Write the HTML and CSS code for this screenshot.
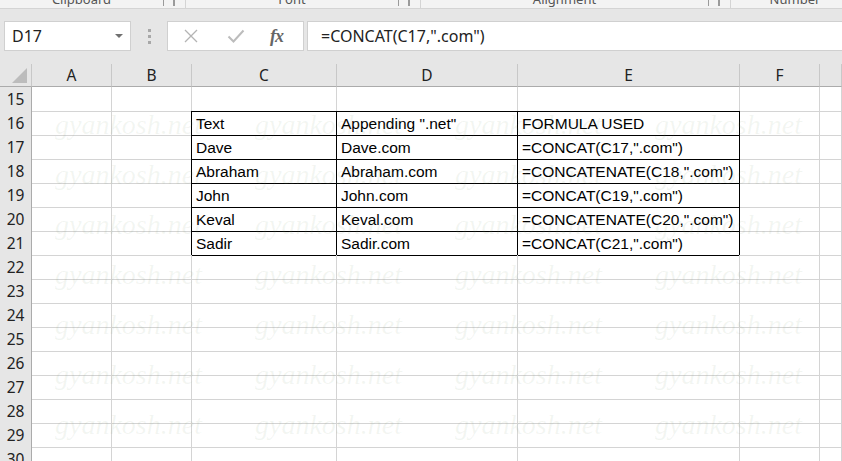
FILE: index.html
```html
<!DOCTYPE html>
<html lang="en">
  <head>
    <meta charset="UTF-8" />
    <meta name="viewport" content="width=device-width, initial-scale=1.0" />
    <title>CONCAT</title>
    <link rel="stylesheet" href="styles.css">
  </head>
  <body>
    <header class="ribbon">
      <div class="group g1"><span class="label">Clipboard</span><span class="launcher"></span></div>
      <div class="group g2"><span class="label">Font</span><span class="launcher"></span></div>
      <div class="group g3"><span class="label">Alignment</span><span class="launcher"></span></div>
      <div class="group g4"><span class="label">Number</span><span class="launcher"></span></div>
    </header>
    <div class="fbar">
      <div class="namebox">
        <span>D17</span>
        <span class="arrow"></span>
      </div>
      <div class="grip"><i></i><i></i><i></i></div>
      <div class="buttons">
        <svg class="cancel" width="16" height="16" viewBox="0 0 16 16">
          <path d="M2 2 L14 14 M14 2 L2 14" stroke="#b4b4b4" stroke-width="1.3" fill="none" />
        </svg>
        <svg class="enter" width="18" height="16" viewBox="0 0 18 16">
          <path d="M1.5 8.5 L6.5 13.5 L16.5 2.5" stroke="#bcbcbc" stroke-width="2" fill="none" />
        </svg>
        <span class="fx">fx</span>
      </div>
      <div class="formula">=CONCAT(C17,".com")</div>
    </div>
    <main class="sheet">
      <div class="row heads">
        <div class="corner"><span class="tri"></span></div>
        <div class="ch">A</div>
        <div class="ch">B</div>
        <div class="ch">C</div>
        <div class="ch">D</div>
        <div class="ch">E</div>
        <div class="ch">F</div>
        <div class="ch"></div>
      </div>
      <div class="body">
        <div class="row"><div class="rh">15</div><div class="c"></div><div class="c"></div><div class="c bb"></div><div class="c bb"></div><div class="c bb"></div><div class="c"></div><div class="c"></div></div>
        <div class="row"><div class="rh">16</div><div class="c"></div><div class="c br"></div><div class="c t">Text</div><div class="c t">Appending ".net"</div><div class="c t">FORMULA USED</div><div class="c"></div><div class="c"></div></div>
        <div class="row"><div class="rh">17</div><div class="c"></div><div class="c br"></div><div class="c t">Dave</div><div class="c t">Dave.com</div><div class="c t">=CONCAT(C17,".com")</div><div class="c"></div><div class="c"></div></div>
        <div class="row"><div class="rh">18</div><div class="c"></div><div class="c br"></div><div class="c t">Abraham</div><div class="c t">Abraham.com</div><div class="c t">=CONCATENATE(C18,".com")</div><div class="c"></div><div class="c"></div></div>
        <div class="row"><div class="rh">19</div><div class="c"></div><div class="c br"></div><div class="c t">John</div><div class="c t">John.com</div><div class="c t">=CONCAT(C19,".com")</div><div class="c"></div><div class="c"></div></div>
        <div class="row"><div class="rh">20</div><div class="c"></div><div class="c br"></div><div class="c t">Keval</div><div class="c t">Keval.com</div><div class="c t">=CONCATENATE(C20,".com")</div><div class="c"></div><div class="c"></div></div>
        <div class="row"><div class="rh">21</div><div class="c"></div><div class="c br"></div><div class="c t">Sadir</div><div class="c t">Sadir.com</div><div class="c t">=CONCAT(C21,".com")</div><div class="c"></div><div class="c"></div></div>
        <div class="row"><div class="rh">22</div><div class="c"></div><div class="c"></div><div class="c"></div><div class="c"></div><div class="c"></div><div class="c"></div><div class="c"></div></div>
        <div class="row"><div class="rh">23</div><div class="c"></div><div class="c"></div><div class="c"></div><div class="c"></div><div class="c"></div><div class="c"></div><div class="c"></div></div>
        <div class="row"><div class="rh">24</div><div class="c"></div><div class="c"></div><div class="c"></div><div class="c"></div><div class="c"></div><div class="c"></div><div class="c"></div></div>
        <div class="row"><div class="rh">25</div><div class="c"></div><div class="c"></div><div class="c"></div><div class="c"></div><div class="c"></div><div class="c"></div><div class="c"></div></div>
        <div class="row"><div class="rh">26</div><div class="c"></div><div class="c"></div><div class="c"></div><div class="c"></div><div class="c"></div><div class="c"></div><div class="c"></div></div>
        <div class="row"><div class="rh">27</div><div class="c"></div><div class="c"></div><div class="c"></div><div class="c"></div><div class="c"></div><div class="c"></div><div class="c"></div></div>
        <div class="row"><div class="rh">28</div><div class="c"></div><div class="c"></div><div class="c"></div><div class="c"></div><div class="c"></div><div class="c"></div><div class="c"></div></div>
        <div class="row"><div class="rh">29</div><div class="c"></div><div class="c"></div><div class="c"></div><div class="c"></div><div class="c"></div><div class="c"></div><div class="c"></div></div>
        <div class="row"><div class="rh">30</div><div class="c"></div><div class="c"></div><div class="c"></div><div class="c"></div><div class="c"></div><div class="c"></div><div class="c"></div></div>
        <div class="watermark">
          <span>gyankosh.net</span><span>gyankosh.net</span><span>gyankosh.net</span><span>gyankosh.net</span>
          <span>gyankosh.net</span><span>gyankosh.net</span><span>gyankosh.net</span><span>gyankosh.net</span>
          <span>gyankosh.net</span><span>gyankosh.net</span><span>gyankosh.net</span><span>gyankosh.net</span>
          <span>gyankosh.net</span><span>gyankosh.net</span><span>gyankosh.net</span><span>gyankosh.net</span>
          <span>gyankosh.net</span><span>gyankosh.net</span><span>gyankosh.net</span><span>gyankosh.net</span>
          <span>gyankosh.net</span><span>gyankosh.net</span><span>gyankosh.net</span><span>gyankosh.net</span>
          <span>gyankosh.net</span><span>gyankosh.net</span><span>gyankosh.net</span><span>gyankosh.net</span>
        </div>
      </div>
    </main>
  </body>
</html>
```

FILE: styles.css
```css
* {
  box-sizing: border-box;
}
body {
  margin: 0;
  padding: 0;
  width: 842px;
  height: 461px;
  overflow: hidden;
  background-color: #e6e6e6;
  font-family: "Noto Sans", "Open Sans", sans-serif;
  color: #222;
}
.ribbon {
  display: flex;
  height: 9px;
  overflow: hidden;
  background-color: #f3f3f3;
  border-bottom: 1px solid #d4d4d4;
}
.group {
  --g-width: 186px;
  display: flex;
  width: var(--g-width);
  flex: none;
  border-right: 1px solid #d4d4d4;
}
.g2 {
  --g-width: 235px;
}
.g3 {
  --g-width: 310px;
}
.g4 {
  --g-width: 150px;
  border-right: none;
}
.label {
  flex: 1;
  text-align: center;
  font-size: 13px;
  line-height: 16px;
  margin-top: -9px;
  color: #555;
}
.launcher {
  width: 12px;
  margin-right: 10px;
  height: 6px;
  border-left: 1px solid #9a9a9a;
  border-right: 2px solid #9a9a9a;
}
.g4 .launcher {
  visibility: hidden;
}
.fbar {
  display: flex;
  align-items: center;
  padding: 12px 0 13px 4px;
}
.namebox,
.buttons,
.formula {
  height: 30px;
  background-color: #fff;
  border: 1px solid #d0d0d0;
  display: flex;
  align-items: center;
}
.namebox {
  width: 127px;
  padding: 0 7px 0 7px;
  justify-content: space-between;
  font-size: 16px;
}
.arrow {
  border-top: 4px solid #707070;
  border-left: 4px solid transparent;
  border-right: 4px solid transparent;
}
.grip {
  display: flex;
  flex-direction: column;
  gap: 3px;
  margin-left: 17px;
  margin-right: 16px;
}
.grip i {
  width: 3px;
  height: 3px;
  background-color: #a8a8a8;
}
.buttons {
  width: 137px;
  padding-left: 15px;
}
.enter {
  margin-left: 28px;
}
.fx {
  margin-left: 25px;
  font-family: "Liberation Serif", serif;
  font-style: italic;
  font-weight: bold;
  font-size: 18px;
  color: #666;
  letter-spacing: -1px;
}
.formula {
  flex: 1;
  margin-left: 3px;
  border-right: none;
  padding-left: 13px;
  font-size: 16px;
}
.sheet {
  display: flex;
  flex-direction: column;
}
.row {
  display: grid;
  grid-template-columns: 32px 80px 80px 145px 181px 222px 80px 1fr;
  height: 24px;
}
.heads {
  height: 23px;
}
.heads > div {
  border-right: 1px solid #c8c8c8;
  border-bottom: 1px solid #ababab;
  text-align: center;
  font-size: 15.5px;
  line-height: 22px;
}
.corner {
  position: relative;
}
.tri {
  position: absolute;
  right: 4px;
  bottom: 3px;
  border-bottom: 15px solid #bcbcbc;
  border-left: 15px solid transparent;
}
.body {
  position: relative;
  overflow: hidden;
  background-color: #fff;
}
.rh {
  background-color: #e6e6e6;
  border-right: 1px solid #ababab;
  border-bottom: 1px solid #c8c8c8;
  text-align: center;
  font-size: 15.5px;
  line-height: 23px;
  padding-top: 1px;
}
.c {
  border-right: 1px solid #d4d4d4;
  border-bottom: 1px solid #d4d4d4;
  font-family: "Liberation Sans", Arial, sans-serif;
  font-size: 15.5px;
  line-height: 23px;
  padding: 1px 0 0 4px;
  white-space: nowrap;
  color: #000;
}
.bb {
  border-bottom-color: #000;
}
.br {
  border-right-color: #000;
}
.t {
  border-right-color: #000;
  border-bottom-color: #000;
}
.watermark {
  position: absolute;
  top: 13px;
  left: 55px;
  width: 800px;
  display: flex;
  flex-wrap: wrap;
  pointer-events: none;
}
.watermark span {
  width: 200px;
  height: 50px;
  line-height: 50px;
  font-family: "Liberation Serif", serif;
  font-style: italic;
  font-size: 28px;
  color: rgba(120, 150, 110, 0.09);
}
```
